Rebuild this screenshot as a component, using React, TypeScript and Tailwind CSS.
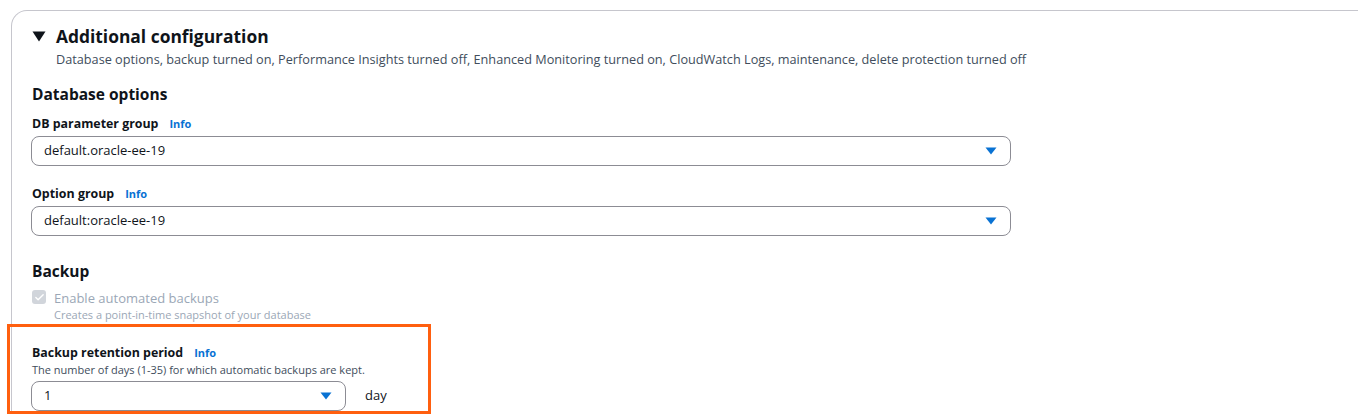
import { Check } from 'lucide-react'

const FONT = { fontFamily: '"Open Sans", "Noto Sans", Arial, sans-serif' }

function InfoLink() {
  return <span className="ml-[11px] text-[11px] font-bold text-[#0972d3]">Info</span>
}

function Caret() {
  return (
    <svg width="12" height="8" viewBox="0 0 12 8" className="shrink-0">
      <path d="M0.5 0.5 L11.5 0.5 L6 7.5 Z" fill="#0972d3" />
    </svg>
  )
}

function SelectBox({ value, width }: { value: string; width: string }) {
  return (
    <div
      className={`flex h-[30px] items-center justify-between rounded-[8px] border border-[#8c8c94] bg-white pl-[12px] pr-[13px] ${width}`}
    >
      <span className="text-[13px] text-[#0f141a]">{value}</span>
      <Caret />
    </div>
  )
}

function FieldLabel({ label }: { label: string }) {
  return (
    <div className="flex items-baseline text-[12.4px] font-bold leading-[18px] text-[#0f141a]">
      {label}
      <InfoLink />
    </div>
  )
}

export default function App() {
  return (
    <div className="h-[417px] w-[1358px] overflow-hidden bg-white" style={FONT}>
      <div className="ml-[11px] mt-[10px] w-[1400px] rounded-t-[16px] border border-b-0 border-[#c6c6cd] pl-[20px] pt-[13px]">
        {/* header */}
        <div className="flex items-center gap-[10px]">
          <svg width="14" height="11" viewBox="0 0 14 11" className="mt-[1px]">
            <path d="M0.5 0.5 L13.5 0.5 L7 10.5 Z" fill="#0f141a" />
          </svg>
          <h2 className="text-[17.4px] font-bold leading-[24px] text-[#0f141a]">Additional configuration</h2>
        </div>
        <p className="ml-[24px] mt-[3px] text-[12.7px] leading-[16px] text-[#414d5c]">
          Database options, backup turned on, Performance Insights turned off, Enhanced Monitoring turned on,
          CloudWatch Logs, maintenance, delete protection turned off
        </p>

        {/* database options */}
        <h3 className="mt-[16px] text-[15.5px] font-bold leading-[22px] text-[#0f141a]">Database options</h3>

        <div className="mt-[10px]">
          <FieldLabel label="DB parameter group" />
          <div className="-ml-[1px] mt-[3px]">
            <SelectBox value="default.oracle-ee-19" width="w-[980px]" />
          </div>
        </div>

        <div className="mt-[19px]">
          <FieldLabel label="Option group" />
          <div className="-ml-[1px] mt-[3px]">
            <SelectBox value="default:oracle-ee-19" width="w-[980px]" />
          </div>
        </div>

        {/* backup */}
        <h3 className="mt-[24px] text-[15.5px] font-bold leading-[22px] text-[#0f141a]">Backup</h3>

        <div className="mt-[7px] flex gap-[8px]">
          <div className="mt-[1px] flex h-[14px] w-[14px] items-center justify-center rounded-[3px] bg-[#d1d5db]">
            <Check size={11} strokeWidth={3} color="#ffffff" />
          </div>
          <div>
            <div className="text-[13px] leading-[18px] text-[#9ba7b6]">Enable automated backups</div>
            <div className="text-[11px] leading-[16px] text-[#9ba7b6]">Creates a point-in-time snapshot of your database</div>
          </div>
        </div>

        {/* retention period, highlighted */}
        <div className="-ml-[25px] mt-[1px] w-[424px] border-[3px] border-[#ff5f0f] pl-[22px] pt-[17px]">
          <FieldLabel label="Backup retention period" />
          <div className="text-[11px] leading-[16px] text-[#414d5c]">
            The number of days (1-35) for which automatic backups are kept.
          </div>
          <div className="-ml-[1px] mt-[3px] flex items-center gap-[19px]">
            <SelectBox value="1" width="w-[315px]" />
            <span className="text-[13px] text-[#0f141a]">day</span>
          </div>
        </div>
      </div>
    </div>
  )
}
